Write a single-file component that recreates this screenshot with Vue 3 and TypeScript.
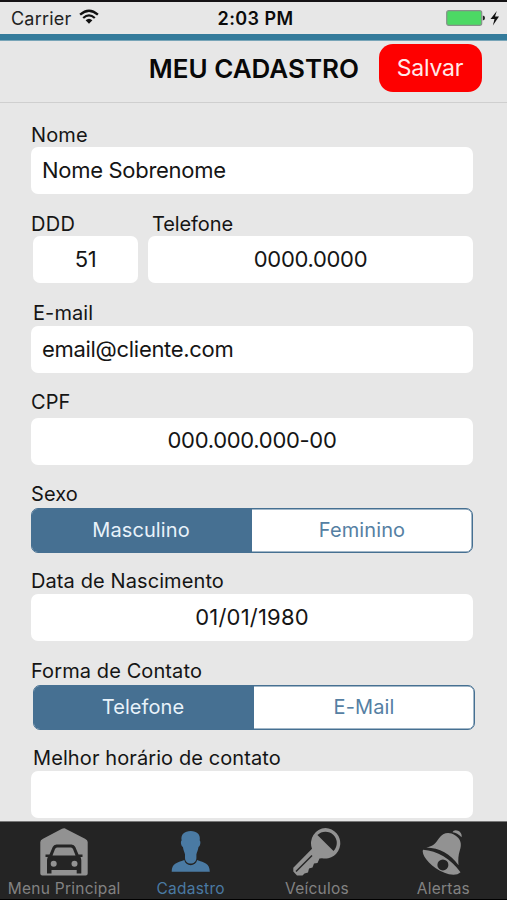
<script setup lang="ts">
import { ref } from 'vue'

type Icon = 'garage' | 'person' | 'key' | 'bell'
interface Tab { icon: Icon; label: string }

const tabs: Tab[] = [
  { icon: 'garage', label: 'Menu Principal' },
  { icon: 'person', label: 'Cadastro' },
  { icon: 'key', label: 'Veículos' },
  { icon: 'bell', label: 'Alertas' },
]
const activeTab = ref<Icon>('person')

const nome = ref('Nome Sobrenome')
const ddd = ref('51')
const telefone = ref('0000.0000')
const email = ref('email@cliente.com')
const cpf = ref('000.000.000-00')
const nascimento = ref('01/01/1980')
const horario = ref('')
const sexo = ref('Masculino')
const contato = ref('Telefone')
</script>

<template>
  <div class="screen">
    <header class="status">
      <div class="carrier">
        <span>Carrier</span>
        <svg class="wifi" viewBox="0 0 20 15" width="20" height="15">
          <g fill="none" stroke="#111" stroke-width="2.3">
            <path d="M1.1 5.7Q10-2.2 18.9 5.7" />
            <path d="M4.2 9Q10 3.8 15.8 9" />
          </g>
          <path d="M6.6 11.3Q10 8.3 13.4 11.3L10 14.8Z" fill="#111" />
        </svg>
      </div>
      <strong class="clock">2:03 PM</strong>
      <div class="power">
        <svg viewBox="0 0 54 18" width="54" height="18">
          <rect x="1.700" y="1.700" width="35" height="14.600" rx="2" fill="#4cd964" stroke="#86918a" stroke-width="1.200" />
          <path d="M37.800 6.500Q40 6.800 40 9T37.800 11.600Z" fill="#222" />
          <path d="M51.800 2L45.500 10h4l-1.600 6.500L54 7.600h-4Z" fill="#111" />
        </svg>
      </div>
    </header>
    <div class="accent"></div>
    <div class="titlebar">
      <h1>MEU CADASTRO</h1>
      <button class="save" type="button">Salvar</button>
    </div>

    <main class="form">
      <label class="field nome"><span class="label">Nome</span><input v-model="nome" class="input" /></label>
      <div class="phone">
        <label class="field ddd"><span class="label">DDD</span><input v-model="ddd" class="input center" /></label>
        <label class="field tel"><span class="label">Telefone</span><input v-model="telefone" class="input center" /></label>
      </div>
      <label class="field email"><span class="label">E-mail</span><input v-model="email" class="input" /></label>
      <label class="field cpf"><span class="label">CPF</span><input v-model="cpf" class="input center" /></label>
      <div class="field sexo">
        <span class="label">Sexo</span>
        <div class="segmented">
          <button v-for="o in ['Masculino', 'Feminino']" :key="o" type="button" :class="{ on: sexo === o }" @click="sexo = o">{{ o }}</button>
        </div>
      </div>
      <label class="field nascimento"><span class="label">Data de Nascimento</span><input v-model="nascimento" class="input center" /></label>
      <div class="field contato">
        <span class="label">Forma de Contato</span>
        <div class="segmented">
          <button v-for="o in ['Telefone', 'E-Mail']" :key="o" type="button" :class="{ on: contato === o }" @click="contato = o">{{ o }}</button>
        </div>
      </div>
      <label class="field horario"><span class="label">Melhor horário de contato</span><input v-model="horario" class="input" /></label>
    </main>

    <nav class="tabs">
      <button v-for="t in tabs" :key="t.icon" type="button" class="tab" :class="{ active: activeTab === t.icon }" @click="activeTab = t.icon">
        <svg v-if="t.icon === 'garage'" viewBox="0 0 50 50" width="50" height="50">
          <path d="M25 1L46 11.800Q48.700 13.200 48.700 15V46.500Q48.700 48.500 46.700 48.500H3.300Q1.300 48.500 1.300 46.500V15Q1.300 13.200 4 11.800L23 1.700Q25 .7 27 1.700Z" fill="currentColor" />
          <path d="M17.500 17.500H32.500Q35.200 17.500 36.300 20L39.500 27.400H43.500V30H41.500Q42.300 31.500 42.300 33.500V46.500H37.700V43H12.500V46.500H8V33.500Q8 31.500 8.800 30H6.500V27.400H10.500L13.700 20Q14.800 17.500 17.500 17.500Z" fill="#242424" />
          <path d="M18 20.500H32Q33.300 20.500 34 22L36.500 28.500H13.500L16 22Q16.700 20.500 18 20.500Z" fill="currentColor" />
          <circle cx="14.700" cy="36.800" r="3" fill="currentColor" />
          <circle cx="35.500" cy="36.800" r="3" fill="currentColor" />
        </svg>
        <svg v-else-if="t.icon === 'person'" viewBox="0 0 50 50" width="50" height="50">
          <path d="M15.600 13.500C14.500 7.500 18.500 4 24.700 4S34.800 7.500 33.700 13.500C35 14 34.400 19.500 32.500 20C32 23.500 30.800 25 30.400 27.500V31C30.400 34.500 28 36.500 24.700 36.500S19 34.500 19 31V27.500C18.600 25 17.400 23.500 16.900 20C15 19.500 14.300 14 15.600 13.500Z" fill="currentColor" />
          <path d="M18.300 33C19 36.300 21.500 38.200 24.700 38.200S30.400 36.300 31.100 33C38.500 35.500 43.800 36.500 43.800 44.800H5.700C5.700 36.500 11 35.500 18.300 33Z" fill="currentColor" />
        </svg>
        <svg v-else-if="t.icon === 'key'" viewBox="0 0 50 50" width="50" height="50">
          <path fill-rule="evenodd" d="M33.500 1A15.300 15.300 0 1 1 30 31.300L27.500 31.500 25.500 36 22 36.500 20.500 40.500 17 41.500 16 45.500 12.500 46.500 10.500 48.500H5L1.300 44.500V40.800L20 21.800A15.300 15.300 0 0 1 33.500 1ZM25.400 8L41.500 24A10.600 10.600 0 0 0 25.400 8Z" fill="currentColor" />
          <path d="M4 44.500L20 28.500" fill="none" stroke="#242424" stroke-width="1.500" />
        </svg>
        <svg v-else viewBox="0 0 50 50" width="50" height="50">
          <path d="M34.500 5.300C36 .8 45 3.800 43.600 10.300C40.500 7 38 5.800 34.500 5.300Z" fill="currentColor" />
          <path d="M8.300 20.600C15 19.500 17.500 16.500 21 11.300C25 5.300 31.500 4.600 37 8.200C43 12 44 17 41.800 23.500C40.300 28.500 40 32.500 40.500 38.300C32.500 27 21.500 21 8.300 20.600Z" fill="currentColor" />
          <path d="M5.200 22.700C19 23.500 33 32 42.500 45.200C39 48.800 32 48 26.500 45.700C14 41 5 30.500 4.700 24.500Q4.600 23.200 5.200 22.700Z" fill="currentColor" />
          <circle cx="24.900" cy="37.900" r="5.500" fill="#242424" />
        </svg>
        <span>{{ t.label }}</span>
      </button>
    </nav>
  </div>
</template>

<style>
body { margin: 0; background: #e7e7e7; }
</style>

<style scoped>
* { box-sizing: border-box; }
.screen {
  display: flex; flex-direction: column;
  width: 507px; height: 900px; overflow: hidden;
  border-top: 2px solid #151315; border-bottom: 1px solid #000;
  background: #e7e7e7; color: #151515;
  font-family: Inter, "Liberation Sans", sans-serif;
}
button, input { border: 0; padding: 0; margin: 0; font: inherit; color: inherit; background: none; outline: 0; }
.status {
  flex: none; display: grid; grid-template-columns: 1fr auto 1fr; align-items: center;
  height: 32px; padding: 0 8px 0 11px; font-size: 18px;
}
.carrier { display: flex; align-items: center; gap: 8px; letter-spacing: .2px; color: #222; }
.wifi { margin-top: -3px; }
.clock { padding-left: 1px; font-weight: 600; font-size: 18px; letter-spacing: .4px; color: #0b0b0b; }
.power { display: flex; justify-content: flex-end; }
.accent { flex: none; height: 7px; background: #347b9b; border-bottom: 1px solid #78a5b8; }
.titlebar {
  flex: none; display: flex; align-items: flex-start; justify-content: flex-end; gap: 20px;
  height: 62px; padding: 3px 25px 0 0; border-bottom: 1px solid #cfcfcf;
}
h1 { margin: 0; font-size: 26px; line-height: 49px; font-weight: 600; color: #080808; }
.save { width: 103px; height: 48px; padding-right: 1px; border-radius: 14px; background: #fe0000; color: #ffe9e9; font-size: 23px; letter-spacing: -.2px; }
.form { flex: 1; min-height: 0; overflow: hidden; padding: 20px 34px 0 31px; }
.field { display: flex; flex-direction: column; }
.label { flex: none; height: 24px; line-height: 24px; font-size: 20px; letter-spacing: .1px; white-space: nowrap; }
.input {
  width: 100%; height: 47px; padding: 0 11px; border-radius: 7px;
  background: #fff; font-size: 22px; line-height: 47px; letter-spacing: -.3px;
}
.center { text-align: center; }
.phone { display: flex; gap: 10px; margin-top: 18px; padding-left: 2px; }
.phone .input, .email .input { height: 47px; padding-bottom: 1px; }
.ddd { width: 105px; }
.ddd .label { margin-left: -2px; letter-spacing: .3px; }
.tel { flex: 1; }
.tel .label { margin-left: 4px; letter-spacing: -.1px; }
.email { margin-top: 19px; }
.email .label { line-height: 22px; }
.email .label, .horario .label { padding-left: 2px; }
.cpf { margin-top: 17px; }
.cpf .label { margin-bottom: 4px; line-height: 25px; }
.cpf .input { padding-bottom: 2px; }
.sexo { margin-top: 19px; }
.sexo .label, .contato .label { line-height: 20px; }
.segmented {
  display: grid; grid-template-columns: 1fr 1fr; height: 45px; overflow: hidden;
  border: 1.500px solid #467092; border-radius: 7px; background: #fff; color: #5580a3;
  box-shadow: inset 0 0 0 .5px #467092;
}
.segmented button { padding-bottom: 1px; font-size: 20px; letter-spacing: .1px; }
.segmented .on { background: #467092; color: #e8f2fa; }
.sexo .on { padding-right: 2px; }
.nascimento { margin-top: 17px; }
.nascimento .label, .horario .label { line-height: 22px; }
.nascimento .input { letter-spacing: .2px; }
.contato { margin-top: 20px; }
.contato .segmented { margin: 0 -2px 0 2px; }
.contato .on { padding-right: 2px; }
.horario { margin-top: 17px; }
.tabs {
  flex: none; display: grid; grid-template-columns: repeat(4, 126.400px);
  height: 78px; padding-left: 1px; border-top: 1px solid #777; background: #242424; color: #929292;
}
.tab { display: flex; flex-direction: column; align-items: center; padding-top: 5px; }
.tab span { margin-top: 2px; font-size: 15.500px; line-height: 20px; letter-spacing: .25px; color: #828282; white-space: nowrap; }
.tab.active, .tab.active span { color: #4a7aa3; }
</style>
